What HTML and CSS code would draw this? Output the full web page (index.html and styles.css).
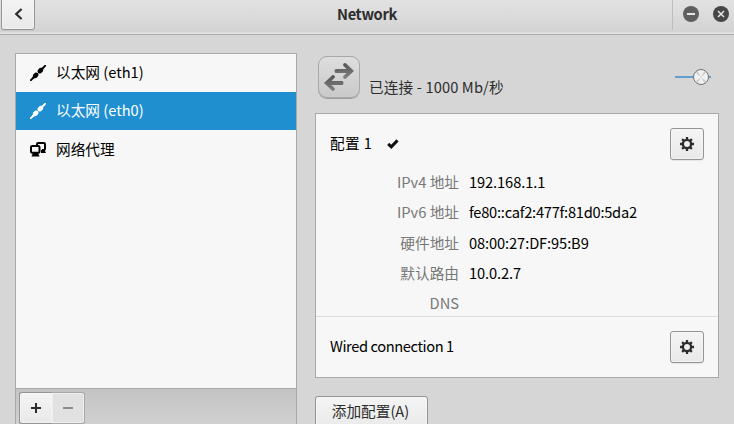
FILE: index.html
```html
<!DOCTYPE html>
<html lang="zh-CN">
<head>
<meta charset="utf-8">
<title>Network</title>
<link rel="stylesheet" href="styles.css">
</head>
<body>
<svg class="defs" width="0" height="0" aria-hidden="true">
  <symbol id="plug" viewBox="0 0 16 16">
    <path d="M.7 15.3 4 12M12 4 15.3.7" fill="none" stroke="currentColor" stroke-width="1.9" stroke-linecap="round"/>
    <path d="M2.6 13.4 3 9.7 5 7.8Q6.5 7 7.9 8.1 9 9.5 8.2 11L6.3 13Z" fill="currentColor"/>
    <path d="M13.4 2.6 9.7 3 7.8 5Q7 6.5 8.1 7.9 9.5 9 11 8.2L13 6.3Z" fill="currentColor"/>
  </symbol>
  <symbol id="gear" viewBox="0 0 16 16">
    <circle cx="8" cy="8" r="4.1" fill="none" stroke="currentColor" stroke-width="2.3"/>
    <path d="M8 1v2.4M8 12.6V15M1 8h2.4M12.6 8H15M3.1 3.1l1.7 1.7M11.2 11.2l1.7 1.7M3.1 12.9l1.7-1.7M11.2 4.8l1.7-1.7" stroke="currentColor" stroke-width="2.3"/>
  </symbol>
</svg>
<header class="header">
  <button class="back" aria-label="Back"><svg width="12" height="14" viewBox="0 0 12 14"><path d="M8.6 2 3.2 7l5.4 5" fill="none" stroke="currentColor" stroke-width="2.2"/></svg></button>
  <h1 class="title">Network</h1>
  <div class="controls">
    <svg width="16" height="16" viewBox="0 0 16 16"><circle cx="8" cy="8" r="8" fill="#5f5f5f"/><path d="M4 8h8" stroke="#e6e6e6" stroke-width="2"/></svg>
    <svg width="16" height="16" viewBox="0 0 16 16"><circle cx="8" cy="8" r="8" fill="#474747"/><path d="m5 5 6 6m0-6-6 6" stroke="#e6e6e6" stroke-width="1.5"/></svg>
  </div>
</header>
<main class="main">
  <aside class="sidebar">
    <ul class="devices">
      <li class="device"><svg width="16" height="16"><use href="#plug"/></svg><span>以太网 (eth1)</span></li>
      <li class="device selected"><svg width="16" height="16"><use href="#plug"/></svg><span>以太网 (eth0)</span></li>
      <li class="device"><svg width="16" height="16" viewBox="0 0 16 16"><path d="M7 3V2.2Q7 1 8.2 1h5.6Q15 1 15 2.2v4.6Q15 8 13.8 8H12" fill="none" stroke="currentColor" stroke-width="2"/><path d="M11 8h3.5l1.5 3h-5z" fill="currentColor"/><rect x="1" y="4" width="8.5" height="6.8" rx="1.2" fill="none" stroke="currentColor" stroke-width="2"/><path d="M3 11h5L9.5 14.5h-8z" fill="currentColor"/></svg><span>网络代理</span></li>
    </ul>
    <div class="toolbar">
      <div class="pair">
        <button class="add" aria-label="Add"><svg width="12" height="12"><path d="M1 6h10M6 1v10" stroke="#2c2c2c" stroke-width="2"/></svg></button>
        <button class="remove" aria-label="Remove" disabled><svg width="12" height="12"><path d="M1 6h10" stroke="#8b8b8b" stroke-width="2"/></svg></button>
      </div>
    </div>
  </aside>
  <section class="content">
    <div class="status">
      <div class="wired"><svg width="32" height="30" viewBox="0 0 32 30">
        <defs><linearGradient id="arrows" x2="0" y2="1"><stop stop-color="#555"/><stop offset="1" stop-color="#828282"/></linearGradient></defs>
        <path d="M12.5 7h11l-3.4-3.6Q20 1 22.5 1L31 9l-8.5 8Q20 17 20.1 14.5L23.5 11h-11q-2-2 0-4z" fill="url(#arrows)"/>
        <path d="M19.5 19h-11l3.4-3.6Q12 13 9.5 13L1 21l8.5 8q2.5 0 2.4-2.4L8.5 23h11q2-2 0-4z" fill="url(#arrows)"/>
      </svg></div>
      <span class="state">已连接 - 1000 Mb/秒</span>
      <div class="switch"><svg width="38" height="18" viewBox="0 0 38 18"><path d="M1 9h36" stroke="#629fd0" stroke-width="2"/><circle cx="27" cy="9" r="7.5" fill="#f1f1f1" stroke="#717171"/><path d="m27 9-5-4.2 1.8-1.5zM27 9l5-4.2-1.8-1.5zM27 9l-5 4.2 1.8 1.5zM27 9l5 4.2-1.8 1.5z" fill="#c9c9c9"/></svg></div>
    </div>
    <div class="profiles">
      <div class="profile active">
        <div class="row"><span>配置 1</span><svg class="check" width="12" height="12" viewBox="0 0 12 12"><path d="m1.2 5.8 3.1 3L10.5 2.4" fill="none" stroke="#111" stroke-width="3"/></svg><button class="settings" aria-label="Settings"><svg width="16" height="16"><use href="#gear"/></svg></button></div>
        <dl class="details">
          <dt>IPv4 地址</dt><dd>192.168.1.1</dd>
          <dt>IPv6 地址</dt><dd class="long">fe80::caf2:477f:81d0:5da2</dd>
          <dt>硬件地址</dt><dd>08:00:27:DF:95:B9</dd>
          <dt>默认路由</dt><dd>10.0.2.7</dd>
          <dt>DNS</dt><dd></dd>
        </dl>
      </div>
      <div class="profile second">
        <div class="row"><span class="name">Wired connection 1</span><button class="settings" aria-label="Settings"><svg width="16" height="16"><use href="#gear"/></svg></button></div>
      </div>
    </div>
    <button class="add-profile">添加配置(A)</button>
  </section>
</main>
</body>
</html>
```
FILE: styles.css
```css
* { box-sizing: border-box; }
body {
  margin: 0;
  height: 424px;
  overflow: hidden;
  background: #d6d6d6;
  color: #000;
  font: 14.67px/22px "Noto Sans CJK SC", sans-serif;
}
svg { display: block; flex: none; }
.defs { position: absolute; }
button {
  display: flex;
  align-items: center;
  justify-content: center;
  padding: 0;
  font: inherit;
  color: #2c2c2c;
  background: linear-gradient(#f4f4f4, #e9e9e9);
  border: 1px solid #949494;
  border-radius: 3px;
  box-shadow: inset 0 0 0 1px #fafafa80, 0 1px 0 #00000010;
}
.header {
  display: grid;
  grid-template-columns: 62px 1fr 62px;
  height: 35px;
  background: linear-gradient(#e2e2e2, #d3d3d3 32px, #e4e4e4 33px);
  border-bottom: 1px solid #a9a9a9;
}
.back { width: 34px; height: 34px; margin: -4px 0 0 1px; padding: 2px 0 0 1px; }
.title {
  margin: 0;
  padding-top: 3px;
  text-align: center;
  font-size: 14.67px;
  font-weight: 700;
  letter-spacing: -.35px;
  color: #2d2d2d;
}
.controls {
  display: flex;
  gap: 14px;
  height: 30px;
  padding: 6px 0 0 10px;
  border-left: 1px solid #bdbdbd;
}
.main {
  display: grid;
  grid-template-columns: 282px 404px;
  column-gap: 18px;
  height: 389px;
  padding: 18px 15px 0;
}
.sidebar {
  display: flex;
  flex-direction: column;
  border: 1px solid #a9a9a9;
  border-bottom: 0;
}
.devices {
  height: 335px;
  flex: none;
  margin: 0;
  padding: 0;
  list-style: none;
  background: #f7f7f7;
  border-bottom: 1px solid #a9a9a9;
}
.device {
  display: flex;
  align-items: center;
  gap: 10px;
  height: 38px;
  padding-left: 14px;
}
.device span { padding-bottom: 2px; }
.row span { padding-bottom: 3px; }
.device + .device:last-child { height: 39px; }
.selected { color: #fff; background: #1f8fd0; }
.toolbar { flex: 1; padding: 3px; background: linear-gradient(#c4c4c4, #d2d2d2); }
.pair { display: flex; width: 66px; height: 32px; }
.add { width: 33px; border-right: 0; border-radius: 3px 0 0 3px; }
.remove { width: 33px; border-color: #a9a9a9; border-left: 0; border-radius: 0 3px 3px 0; background: #e1e1e1; }
.status { display: flex; height: 60px; padding: 3px 7px 0 3px; }
.wired {
  display: flex;
  align-items: center;
  justify-content: center;
  width: 42px;
  height: 42px;
  border: 1px solid #a8a8a8;
  border-radius: 9px;
  background: linear-gradient(#dedede, #c9c9c9);
  box-shadow: 0 1px 0 #9d9d9d;
}
.state { margin: 20px 0 0 9px; letter-spacing: .13px; color: #2d2d2d; }
.switch { margin: 12px 0 0 auto; }
.profiles { height: 265px; background: #f7f7f7; border: 1px solid #a9a9a9; }
.profile { padding: 14px 14px 0; }
.active { height: 203px; border-bottom: 1px solid #dcdcdc; }
.row { display: flex; align-items: center; height: 32px; }
.active .row span { letter-spacing: .35px; }
.row .name { letter-spacing: -.4px; }
.check { margin-left: 15px; }
.settings { width: 34px; height: 32px; margin-left: auto; }
.details {
  display: grid;
  grid-template-columns: 129px 1fr;
  grid-auto-rows: 30.3px;
  column-gap: 10px;
  margin: 11px 0 0;
}
dt { text-align: right; color: #777; }
dd { margin: 0; letter-spacing: -.1px; }
.long { letter-spacing: -.25px; }
.add-profile { width: 113px; height: 34px; margin-top: 18px; padding: 0 2px 5px 0; }
```
